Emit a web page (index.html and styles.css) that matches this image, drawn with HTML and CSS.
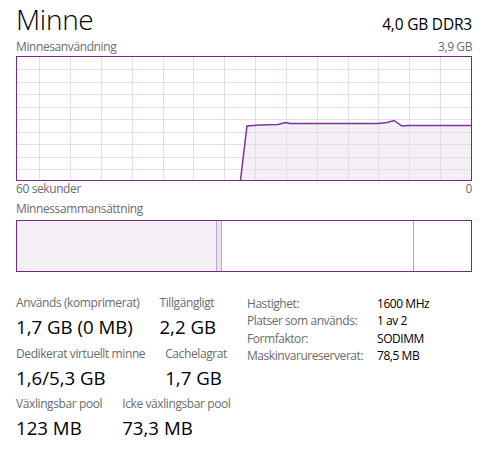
FILE: index.html
```html
<!DOCTYPE html>
<html lang="sv">
<head>
<meta charset="utf-8">
<title>Minne</title>
<link rel="stylesheet" href="styles.css">
</head>
<body>
<main class="page">
  <header class="head">
    <h1 class="title">Minne</h1>
    <span class="spec">4,0 GB DDR3</span>
  </header>

  <div class="axis axis-top">
    <span>Minnesanvändning</span>
    <span>3,9 GB</span>
  </div>

  <div class="chart">
    <svg class="chart-svg" width="454" height="123" viewBox="0 0 454 123">
      <polygon class="area" points="223.5,123 230,69 243,68 261,67.5 269,65.5 273,66.5 361,66.5 370,65.5 377,63.5 385,69 392,68.5 454,68.5 454,123"/>
      <g class="grid">
        <line x1="22.5" y1="0" x2="22.5" y2="123"/>
        <line x1="53.5" y1="0" x2="53.5" y2="123"/>
        <line x1="84.5" y1="0" x2="84.5" y2="123"/>
        <line x1="115.5" y1="0" x2="115.5" y2="123"/>
        <line x1="146.5" y1="0" x2="146.5" y2="123"/>
        <line x1="176.5" y1="0" x2="176.5" y2="123"/>
        <line x1="207.5" y1="0" x2="207.5" y2="123"/>
        <line x1="238.5" y1="0" x2="238.5" y2="123"/>
        <line x1="269.5" y1="0" x2="269.5" y2="123"/>
        <line x1="300.5" y1="0" x2="300.5" y2="123"/>
        <line x1="331.5" y1="0" x2="331.5" y2="123"/>
        <line x1="361.5" y1="0" x2="361.5" y2="123"/>
        <line x1="392.5" y1="0" x2="392.5" y2="123"/>
        <line x1="423.5" y1="0" x2="423.5" y2="123"/>
        <line x1="0" y1="12.5" x2="454" y2="12.5"/>
        <line x1="0" y1="25.5" x2="454" y2="25.5"/>
        <line x1="0" y1="37.5" x2="454" y2="37.5"/>
        <line x1="0" y1="50.5" x2="454" y2="50.5"/>
        <line x1="0" y1="62.5" x2="454" y2="62.5"/>
        <line x1="0" y1="75.5" x2="454" y2="75.5"/>
        <line x1="0" y1="87.5" x2="454" y2="87.5"/>
        <line x1="0" y1="100.5" x2="454" y2="100.5"/>
        <line x1="0" y1="112.5" x2="454" y2="112.5"/>
      </g>
      <polyline class="trace" points="223.5,123 230,69 243,68 261,67.5 269,65.5 273,66.5 361,66.5 370,65.5 377,63.5 385,69 392,68.5 454,68.5"/>
    </svg>
  </div>

  <div class="axis axis-bottom">
    <span>60 sekunder</span>
    <span>0</span>
  </div>

  <div class="axis section-label">Minnessammansättning</div>

  <div class="composition">
    <div class="seg seg-inuse" style="width:199px"></div>
    <div class="seg seg-modified" style="width:6px"></div>
    <div class="seg seg-standby" style="width:191px"></div>
    <div class="seg seg-free" style="width:58px"></div>
  </div>

  <section class="stats">
    <div class="stats-main">
      <div class="stat-row">
        <div class="stat">
          <div class="stat-label">Används (komprimerat)</div>
          <div class="stat-value">1,7 GB (0 MB)</div>
        </div>
        <div class="stat">
          <div class="stat-label">Tillgängligt</div>
          <div class="stat-value">2,2 GB</div>
        </div>
      </div>
      <div class="stat-row">
        <div class="stat">
          <div class="stat-label">Dedikerat virtuellt minne</div>
          <div class="stat-value">1,6/5,3 GB</div>
        </div>
        <div class="stat">
          <div class="stat-label">Cachelagrat</div>
          <div class="stat-value">1,7 GB</div>
        </div>
      </div>
      <div class="stat-row">
        <div class="stat">
          <div class="stat-label">Växlingsbar pool</div>
          <div class="stat-value">123 MB</div>
        </div>
        <div class="stat">
          <div class="stat-label">Icke växlingsbar pool</div>
          <div class="stat-value">73,3 MB</div>
        </div>
      </div>
    </div>

    <dl class="props">
      <dt>Hastighet:</dt><dd>1600 MHz</dd>
      <dt>Platser som används:</dt><dd>1 av 2</dd>
      <dt>Formfaktor:</dt><dd>SODIMM</dd>
      <dt>Maskinvarureserverat:</dt><dd>78,5 MB</dd>
    </dl>
  </section>
</main>
</body>
</html>
```

FILE: styles.css
```css
html, body {
  margin: 0;
  padding: 0;
  background: #ffffff;
}

body {
  font-family: "Open Sans", "Noto Sans", "Liberation Sans", sans-serif;
  color: #000;
}

.page {
  width: 456px;
  padding: 0 0 0 16px;
}

.head {
  display: flex;
  justify-content: space-between;
  align-items: baseline;
  height: 39px;
}

.title {
  margin: 0;
  font-size: 28px;
  font-weight: 300;
  line-height: 38px;
  letter-spacing: -0.3px;
}

.spec {
  font-size: 15.5px;
  line-height: 20px;
  letter-spacing: -0.2px;
  color: #000;
}

.axis {
  display: flex;
  justify-content: space-between;
  font-size: 12px;
  line-height: 16px;
  letter-spacing: -0.4px;
  color: #6b6b6b;
}

.axis-top {
  height: 17px;
}

.chart {
  box-sizing: border-box;
  height: 125px;
  border: 1px solid #74287f;
  background: #fff;
}

.chart-svg {
  display: block;
}

.area {
  fill: #f3eff5;
}

.grid line {
  stroke: #e6dbea;
  stroke-width: 1;
  shape-rendering: crispEdges;
}

.trace {
  fill: none;
  stroke: #80309a;
  stroke-width: 1.5;
}

.section-label {
  margin-top: 4px;
}

.composition {
  box-sizing: border-box;
  display: flex;
  height: 52px;
  margin-top: 3px;
  border: 1px solid #74287f;
}

.seg {
  box-sizing: border-box;
  height: 100%;
}

.seg-inuse {
  background: #f3eff5;
}

.seg-modified {
  background: #ebe1ef;
  border-left: 1px solid #c9a6d4;
  border-right: 1px solid #c9a6d4;
}

.seg-standby {
  background: #fff;
}

.seg-free {
  background: #fff;
  border-left: 1px solid #a8a8a8;
}

.stats {
  display: grid;
  grid-template-columns: 231px auto;
  align-items: start;
  margin-top: 23px;
}

.stats-main {
  display: flex;
  flex-direction: column;
  gap: 6.5px;
}

.stat-row {
  display: flex;
  gap: 20px;
}

.stat-label {
  font-size: 12px;
  line-height: 16px;
  letter-spacing: -0.4px;
  color: #6b6b6b;
  white-space: nowrap;
}

.stat-value {
  margin-top: 4px;
  font-size: 18.67px;
  line-height: 24px;
  color: #000;
  white-space: nowrap;
}

.props {
  display: grid;
  grid-template-columns: 130px auto;
  align-content: start;
  margin: 0;
  font-size: 12px;
  line-height: 17.33px;
  letter-spacing: -0.45px;
}

.props dt {
  color: #6b6b6b;
  white-space: nowrap;
}

.props dd {
  margin: 0;
  color: #000;
  white-space: nowrap;
}
```
